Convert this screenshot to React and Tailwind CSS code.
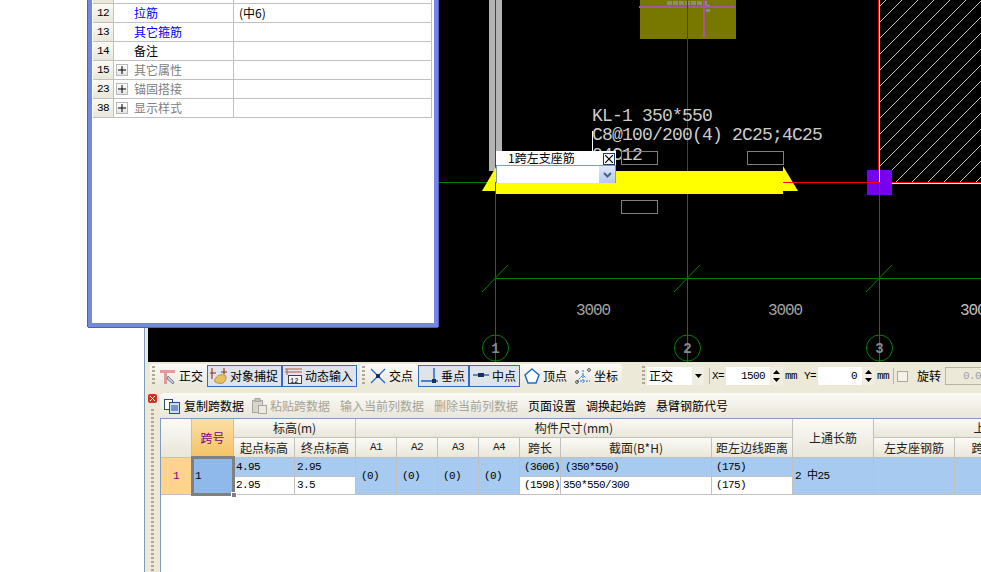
import React from "react";

const cjk = "[font-family:'Noto_Sans_CJK_SC',sans-serif] text-[12px] leading-none whitespace-nowrap";
const mono = "[font-family:'Liberation_Mono','Noto_Sans_CJK_SC',monospace] text-[11px] tracking-[-0.6px] leading-none whitespace-nowrap";
const grip = "w-[3px] h-[20px] shrink-0 bg-[repeating-linear-gradient(to_bottom,#aca99a_0,#aca99a_2px,transparent_2px,transparent_4px)]";
const headBg = "bg-linear-to-b from-[#fbfaf5] to-[#e9e6da]";

// left-edge offset of every hatch line, 16px apart
const hatch = Array.from({ length: 18 }, (_, i) => 6 + i * 16);

const propRows = [
  { no: "12", name: "拉筋", value: "(中6)", color: "text-[#0000ff]" },
  { no: "13", name: "其它箍筋", color: "text-[#0000ff]" },
  { no: "14", name: "备注", color: "text-black" },
  { no: "15", name: "其它属性", plus: true, color: "text-[#808080]" },
  { no: "23", name: "锚固搭接", plus: true, color: "text-[#808080]" },
  { no: "38", name: "显示样式", plus: true, color: "text-[#808080]" },
];

function CadCanvas() {
  return (
    <svg width="833" height="362" viewBox="148 0 833 362" className="block shrink-0 bg-black">
      {/* column and hatch */}
      <rect x="489" y="0" width="13" height="171" fill="#b4b4b4" />
      <line x1="495.5" y1="0" x2="495.5" y2="171" stroke="#e00000" />
      <rect x="640" y="0" width="96" height="39" fill="#787800" />
      <line x1="667" y1="3" x2="707" y2="3" stroke="#8c8c78" strokeWidth="4" strokeDasharray="5 1" />
      <rect x="706" y="5" width="4" height="3" fill="#8c8c78" />
      <rect x="706" y="9" width="4" height="3" fill="#8c8c78" />
      <rect x="639" y="6" width="96" height="2" fill="#a855a0" />
      <rect x="703" y="0" width="2" height="38" fill="#a855a0" />
      <line x1="687.5" y1="0" x2="687.5" y2="171" stroke="#d80000" />
      {hatch.map((y) => (
        <line
          key={y}
          x1={y > 182 ? 880 + y - 182 : 880}
          y1={y > 182 ? 182 : y}
          x2={880 + y}
          y2="0"
          stroke="#c4c4c4"
        />
      ))}
      <rect x="878" y="0" width="1" height="182" fill="#ff0000" />
      <rect x="879" y="0" width="1" height="183" fill="#ffffff" />

      {/* axis */}
      <g stroke="#008000" fill="none" shapeRendering="crispEdges">
        <line x1="438" y1="182.5" x2="495" y2="182.5" />
        <line x1="495.5" y1="171" x2="495.5" y2="362" />
        <line x1="687.5" y1="194" x2="687.5" y2="362" />
        <line x1="879.5" y1="195" x2="879.5" y2="362" />
        <line x1="495" y1="278.5" x2="981" y2="278.5" />
      </g>
      <g stroke="#008000" fill="none">
        <line x1="482" y1="292" x2="508" y2="265" />
        <line x1="674" y1="292" x2="700" y2="265" />
        <line x1="866" y1="292" x2="892" y2="265" />
        <circle cx="495.5" cy="348" r="13" />
        <circle cx="687.5" cy="348" r="13" />
        <circle cx="879.5" cy="348" r="13" />
      </g>
      <g fill="#8a8a8a" fontFamily="Liberation Mono" fontSize="14" fontWeight="700" textAnchor="middle">
        <text x="495.5" y="353">1</text>
        <text x="687.5" y="353">2</text>
        <text x="879.5" y="353">3</text>
      </g>
      <g fill="#a4a4a4" fontFamily="Liberation Mono" fontSize="16" letterSpacing="-1.1">
        <text x="576" y="315">3000</text>
        <text x="768" y="315">3000</text>
        <text x="960" y="315" fill="#c0c0c0">3000</text>
      </g>

      {/* beam */}
      <polygon points="496,167 482,191 496,191" fill="#ffff00" />
      <polygon points="783,166 798,191 783,191" fill="#ffff00" />
      <rect x="496" y="171" width="287" height="23" fill="#ffff00" />
      <rect x="783" y="182" width="198" height="1" fill="#ff0000" />
      <rect x="880" y="183" width="101" height="1" fill="#ffffff" />
      <line x1="495.5" y1="182" x2="495.5" y2="195" stroke="#008000" />
      <rect x="867" y="170" width="25" height="25" fill="#7700ee" />
      <rect x="867" y="182" width="13" height="1" fill="#ff0000" />
      <rect x="879" y="170" width="1" height="12" fill="#ffffff" />
      <rect x="879" y="183" width="1" height="12" fill="#008000" />

      {/* labels */}
      <g fill="#cccccc" fontFamily="Liberation Mono" fontSize="18" letterSpacing="-0.8">
        <text x="592" y="121">KL-1 350*550</text>
        <text x="592" y="140">C8@100/200(4) 2C25;4C25</text>
        <text x="592" y="160">04C12</text>
      </g>
      <rect x="592" y="131" width="1" height="20" fill="#ffffff" />
      <g fill="none" stroke="#808080" shapeRendering="crispEdges">
        <rect x="621.5" y="151.5" width="36" height="13" />
        <rect x="747.5" y="151.5" width="36" height="13" />
        <rect x="621.5" y="200.5" width="36" height="13" />
      </g>
    </svg>
  );
}

function PropWindow() {
  return (
    <div className="absolute left-[88px] top-0 w-[350px] h-[327px] bg-white border-x-[4px] border-b-[4px] border-[#7488e0] shadow-[-1px_0_0_#5558c8,1px_0_0_#5558c8,0_1px_0_#5558c8]">
      <div className="grid grid-cols-[21px_120px_198px] ml-[1px]">
        <div className="h-[4px] bg-[#ece9d8] border-r border-b border-[#c0c0c0]" />
        <div className="h-[4px] border-r border-b border-[#c0c0c0]" />
        <div className="h-[4px] border-r border-b border-[#c0c0c0]" />
        {propRows.map((row) => (
          <React.Fragment key={row.no}>
            <div className={`h-[19px] flex items-center justify-center border-r border-b border-[#c0c0c0] ${headBg} ${mono}`}>{row.no}</div>
            <div className="h-[19px] flex items-center pl-[20px] relative border-r border-b border-[#c0c0c0]">
              {row.plus && (
                <span className="absolute left-[2px] top-[3px] w-[12px] h-[12px] flex items-center justify-center border border-[#b8b8b8] bg-linear-to-b from-white to-[#e4e4e4]">
                  <svg width="8" height="8" viewBox="0 0 8 8"><path d="M4 0v8M0 4h8" stroke="#000" /></svg>
                </span>
              )}
              <span className={`${cjk} ${row.color}`}>{row.name}</span>
            </div>
            <div className="h-[19px] flex items-center pl-[5px] border-r border-b border-[#c0c0c0]">
              {row.value && <span className={cjk}>{row.value}</span>}
            </div>
          </React.Fragment>
        ))}
      </div>
    </div>
  );
}

function SpanPopup() {
  return (
    <div className="absolute left-[496px] top-[151px] w-[120px]">
      <div className="h-[14px] bg-white flex items-center pl-[12px] relative">
        <span className={`${cjk} text-black`}>1跨左支座筋</span>
        <span className="absolute right-[1px] top-[2px] w-[12px] h-[12px] border border-[#1c3a6e] bg-white flex items-center justify-center">
          <svg width="8" height="8" viewBox="0 0 8 8"><path d="M0 0l8 8M8 0L0 8" stroke="#000" strokeWidth="1.2" /></svg>
        </span>
      </div>
      <div className="h-[18px] bg-white border border-[#7f9db9] border-b-0 flex justify-end">
        <span className="w-[16px] h-[17px] bg-linear-to-b from-[#e0e8fb] to-[#b4c8f4] flex items-center justify-center">
          <svg width="9" height="6" viewBox="0 0 9 6"><path d="M1 1l3.5 3.5L8 1" fill="none" stroke="#4d6185" strokeWidth="2" /></svg>
        </span>
      </div>
    </div>
  );
}

function ToolButton({ icon, label, width, active }) {
  return (
    <div
      className={`${width} h-[22px] shrink-0 flex items-center gap-[2px] pl-[2px] border ${
        active ? "border-[#316ac5] bg-[#dfe4ea]" : "border-transparent"
      }`}
    >
      <span className="w-[18px] h-[18px] shrink-0 flex items-center justify-center">{icon}</span>
      <span className={`${cjk} text-black`}>{label}</span>
    </div>
  );
}

const orthoIcon = (
  <svg width="18" height="18" viewBox="0 0 18 18">
    <path d="M1 3h15v3H8v11H5V6H1z" fill="#dc9c9c" />
    <path d="M9 9l6 6-1 2-6-5z" fill="#b9cce4" stroke="#50647c" strokeWidth="0.7" />
  </svg>
);
const snapIcon = (
  <svg width="18" height="18" viewBox="0 0 18 18">
    <path d="M2 1v11M14 1v6" stroke="#a04030" strokeWidth="1.2" />
    <path d="M0 6h6M11 5h6" stroke="#803020" strokeWidth="1.2" />
    <path d="M6 11c1-3 6-4 9-3 2 2 1 6-2 8-3 1-6 0-8-1-1-2 0-3 1-4z" fill="#e8c060" stroke="#8a6a20" strokeWidth="0.6" />
  </svg>
);
const inputIcon = (
  <svg width="18" height="18" viewBox="0 0 18 18">
    <path d="M0 2h17M0 5h17M2 2v6" stroke="#b05a4a" />
    <rect x="3.5" y="8.5" width="13" height="8" fill="#f4f4f4" stroke="#404040" />
    <text x="5" y="15.5" fontSize="7" fontFamily="Liberation Mono" fill="#000">12</text>
  </svg>
);
const crossIcon = (
  <svg width="18" height="18" viewBox="0 0 18 18">
    <path d="M2 2l14 14M16 2L2 16" stroke="#1f6fd0" strokeWidth="1.4" />
    <rect x="7" y="7" width="4" height="4" fill="#153060" />
  </svg>
);
const perpIcon = (
  <svg width="18" height="18" viewBox="0 0 18 18">
    <path d="M0 14h17M13 1v13" stroke="#1f5fc0" strokeWidth="1.4" />
    <rect x="11" y="12" width="4" height="4" fill="#153060" />
  </svg>
);
const midIcon = (
  <svg width="18" height="18" viewBox="0 0 18 18">
    <path d="M1 8h16" stroke="#1f5fc0" strokeWidth="1.4" />
    <rect x="6" y="6" width="6" height="4" fill="#153060" />
  </svg>
);
const vertexIcon = (
  <svg width="18" height="18" viewBox="0 0 18 18">
    <path d="M9 2l7 6-3 8H5L2 8z" fill="#ffffff" stroke="#1f6fd0" strokeWidth="1.5" />
  </svg>
);
const coordIcon = (
  <svg width="18" height="18" viewBox="0 0 18 18">
    <path d="M3 14h13M9 3v13M3 14l6-6 3 3" fill="none" stroke="#2a74d4" strokeDasharray="2 1" />
    <circle cx="3" cy="5" r="1.4" fill="none" stroke="#505050" />
    <circle cx="15" cy="3" r="1.4" fill="none" stroke="#505050" />
    <circle cx="3" cy="15" r="1.4" fill="none" stroke="#505050" />
  </svg>
);

function Spinner() {
  return (
    <span className="w-[13px] h-[18px] shrink-0 bg-[#f0eee2] flex flex-col items-center justify-center gap-[4px]">
      <svg width="7" height="4" viewBox="0 0 7 4"><path d="M0 4h7L3.5 0z" fill="#000" /></svg>
      <svg width="7" height="4" viewBox="0 0 7 4"><path d="M0 0h7L3.5 4z" fill="#000" /></svg>
    </span>
  );
}

function TopToolbar() {
  return (
    <div className="h-[28px] shrink-0 flex items-center pl-[5px] bg-[#ece9d8]">
      <div className={`w-[208px] h-[24px] flex items-center pl-[2px] rounded-[3px] ${headBg}`}>
        <span className={`${grip} mr-[1px]`} />
        <ToolButton icon={orthoIcon} label="正交" width="w-[51px]" />
        <ToolButton icon={snapIcon} label="对象捕捉" width="w-[75px]" active />
        <ToolButton icon={inputIcon} label="动态输入" width="w-[75px]" active />
      </div>
      <div className={`ml-[2px] w-[262px] h-[24px] flex items-center pl-[2px] rounded-[3px] ${headBg}`}>
        <span className={`${grip} mr-[1px]`} />
        <ToolButton icon={crossIcon} label="交点" width="w-[52px]" />
        <ToolButton icon={perpIcon} label="垂点" width="w-[51px]" active />
        <ToolButton icon={midIcon} label="中点" width="w-[51px]" active />
        <ToolButton icon={vertexIcon} label="顶点" width="w-[51px]" />
        <ToolButton icon={coordIcon} label="坐标" width="w-[51px]" />
      </div>
      <div className="ml-[18px] h-[24px] flex items-center pl-[2px] flex-1 overflow-hidden">
        <span className={`${grip} mr-[2px]`} />
        <div className="w-[57px] h-[18px] shrink-0 bg-white flex items-center justify-between pl-[2px]">
          <span className={`${cjk} text-black`}>正交</span>
          <span className="w-[12px] h-[18px] bg-[#f0eee2] flex items-center justify-center">
            <svg width="7" height="4" viewBox="0 0 7 4"><path d="M0 0h7L3.5 4z" fill="#000" /></svg>
          </span>
        </div>
        <span className="ml-[5px] w-px h-[16px] shrink-0 bg-[#b8b5a6]" />
        <span className={`ml-[2px] w-[14px] shrink-0 ${mono} text-black`}>X=</span>
        <div className={`w-[44px] h-[18px] shrink-0 bg-white flex items-center justify-end pr-[5px] ${mono} text-black`}>1500</div>
        <Spinner />
        <span className={`ml-[2px] w-[14px] shrink-0 ${mono} text-black`}>mm</span>
        <span className={`ml-[5px] w-[14px] shrink-0 ${mono} text-black`}>Y=</span>
        <div className={`w-[44px] h-[18px] shrink-0 bg-white flex items-center justify-end pr-[5px] ${mono} text-black`}>0</div>
        <Spinner />
        <span className={`ml-[2px] w-[14px] shrink-0 ${mono} text-black`}>mm</span>
        <span className="ml-[2px] w-px h-[16px] shrink-0 bg-[#b8b5a6]" />
        <span className="ml-[3px] w-[11px] h-[11px] shrink-0 border border-[#aca899] bg-[#f4f2e8]" />
        <span className={`ml-[9px] shrink-0 ${cjk} text-black`}>旋转</span>
        <div className={`ml-[4px] w-[60px] h-[18px] shrink-0 border border-[#b8b5a6] flex items-center pl-[17px] ${mono} text-[#a0a0a0]`}>0.00</div>
      </div>
    </div>
  );
}

function GridToolbar() {
  return (
    <div className={`h-[25px] shrink-0 flex items-center pl-[4px] rounded-tl-[4px] ${headBg}`}>
      <svg width="16" height="16" viewBox="0 0 16 16" className="shrink-0">
        <rect x="0.5" y="1.5" width="8" height="10" fill="#fff" stroke="#2a4a80" />
        <rect x="5.5" y="4.5" width="10" height="11" fill="#cfe0f6" stroke="#1f4aa0" />
        <path d="M7 8h7M7 10h7M7 12h7" stroke="#1f4aa0" />
      </svg>
      <span className={`ml-[4px] w-[60px] shrink-0 ${cjk} text-black`}>复制跨数据</span>
      <svg width="17" height="16" viewBox="0 0 17 16" className="ml-[7px] shrink-0">
        <rect x="1.5" y="2.5" width="10" height="12" fill="#d8d6cc" stroke="#a8a69c" />
        <rect x="4" y="0.5" width="5" height="3" fill="#c4c2b8" stroke="#a8a69c" />
        <rect x="7.5" y="7.5" width="8" height="8" fill="#ece9e0" stroke="#a8a69c" />
      </svg>
      <span className={`ml-[2px] w-[60px] shrink-0 ${cjk} text-[#a5a398]`}>粘贴跨数据</span>
      <span className={`ml-[10px] w-[84px] shrink-0 ${cjk} text-[#a5a398]`}>输入当前列数据</span>
      <span className={`ml-[10px] w-[84px] shrink-0 ${cjk} text-[#a5a398]`}>删除当前列数据</span>
      <span className={`ml-[10px] w-[48px] shrink-0 ${cjk} text-black`}>页面设置</span>
      <span className={`ml-[10px] w-[60px] shrink-0 ${cjk} text-black`}>调换起始跨</span>
      <span className={`ml-[10px] w-[72px] shrink-0 ${cjk} text-black`}>悬臂钢筋代号</span>
    </div>
  );
}

const line = "border-r border-b border-[#c0c0c0]";
const center = "flex items-center justify-center";

function Head({ className = "", children, small }) {
  return (
    <div className={`${center} ${line} ${headBg} ${small ? mono : cjk} text-[#222222] ${className}`}>{children}</div>
  );
}

function Val({ className = "", pad = "pl-[2px]", children, blue }) {
  return (
    <div className={`flex items-center ${pad} ${line} ${blue ? "bg-[#a6caf0]" : "bg-white"} ${mono} text-black ${className}`}>{children}</div>
  );
}

function SpanGrid() {
  return (
    <div className="w-[1100px] grid grid-cols-[31px_42px_61px_61px_41px_41px_41px_41px_41px_151px_81px_81px_81px_82px_85px] grid-rows-[19px_20px_19px_18px] relative">
      <Head className="row-span-2" />
      <div className={`row-span-2 ${center} ${line} bg-linear-to-b from-[#fcdfa6] to-[#f3c264] ${cjk} text-[#800080]`}>跨号</div>
      <Head className="col-span-2">标高(m)</Head>
      <Head className="col-span-7">构件尺寸(mm)</Head>
      <Head className="row-span-2">上通长筋</Head>
      <Head className="col-span-3">上部钢筋</Head>

      <Head>起点标高</Head>
      <Head>终点标高</Head>
      <Head small>A1</Head>
      <Head small>A2</Head>
      <Head small>A3</Head>
      <Head small>A4</Head>
      <Head>跨长</Head>
      <Head>截面(B*H)</Head>
      <Head>距左边线距离</Head>
      <Head>左支座钢筋</Head>
      <Head>跨中钢筋</Head>
      <Head>右支座钢筋</Head>

      <div className={`row-span-2 ${center} ${line} bg-[#fdd38e] ${mono} text-[#800080]`}>1</div>
      <div className="row-span-2 relative -mt-[2px] -ml-[1px] -mr-[1px] -mb-[1px] border-[3px] border-[#808080] bg-[#8fb9ea] flex items-center pl-[1px]">
        <span className={`${mono} text-black`}>1</span>
        <span className="absolute -right-[5px] -bottom-[5px] w-[6px] h-[6px] bg-[#808080] border border-white" />
      </div>
      <Val blue>4.95</Val>
      <Val blue>2.95</Val>
      <Val blue pad="pl-[5px]" className="row-span-2">(0)</Val>
      <Val blue pad="pl-[5px]" className="row-span-2">(0)</Val>
      <Val blue pad="pl-[5px]" className="row-span-2">(0)</Val>
      <Val blue pad="pl-[5px]" className="row-span-2">(0)</Val>
      <Val blue pad="pl-[4px]">(3606)</Val>
      <Val blue pad="pl-[4px]">(350*550)</Val>
      <Val blue pad="pl-[4px]">(175)</Val>
      <Val blue className="row-span-2">2 中25</Val>
      <Val blue className="row-span-2" />
      <Val blue className="row-span-2" />
      <Val blue className="row-span-2" />

      <Val>2.95</Val>
      <Val>3.5</Val>
      <Val pad="pl-[4px]">(1598)</Val>
      <Val>350*550/300</Val>
      <Val pad="pl-[4px]">(175)</Val>
    </div>
  );
}

export default function App() {
  return (
    <div className="relative w-screen h-screen overflow-hidden bg-white flex">
      <div className="w-[144px] shrink-0 bg-white" />
      <div className="flex-1 min-w-0 flex flex-col border-l border-[#7f9db9] bg-[#ece9d8]">
        <div className="h-[362px] shrink-0 flex pl-[3px]">
          <CadCanvas />
        </div>
        <TopToolbar />
        <div className="flex-1 min-h-0 flex">
          <div className="w-[15px] shrink-0 flex flex-col items-center pt-[4px]">
            <span className="w-[9px] h-[9px] rounded-[2px] bg-[#d83020] flex items-center justify-center">
              <svg width="5" height="5" viewBox="0 0 5 5"><path d="M0 0l5 5M5 0L0 5" stroke="#fff" /></svg>
            </span>
            <span className={`${grip} mt-[6px] !h-auto flex-1`} />
          </div>
          <div className="flex-1 min-w-0 flex flex-col pt-[3px]">
            <GridToolbar />
            <div className="flex-1 min-h-0 overflow-hidden bg-white border-t border-l border-[#7f9db9]">
              <SpanGrid />
            </div>
          </div>
        </div>
      </div>
      <PropWindow />
      <SpanPopup />
    </div>
  );
}
